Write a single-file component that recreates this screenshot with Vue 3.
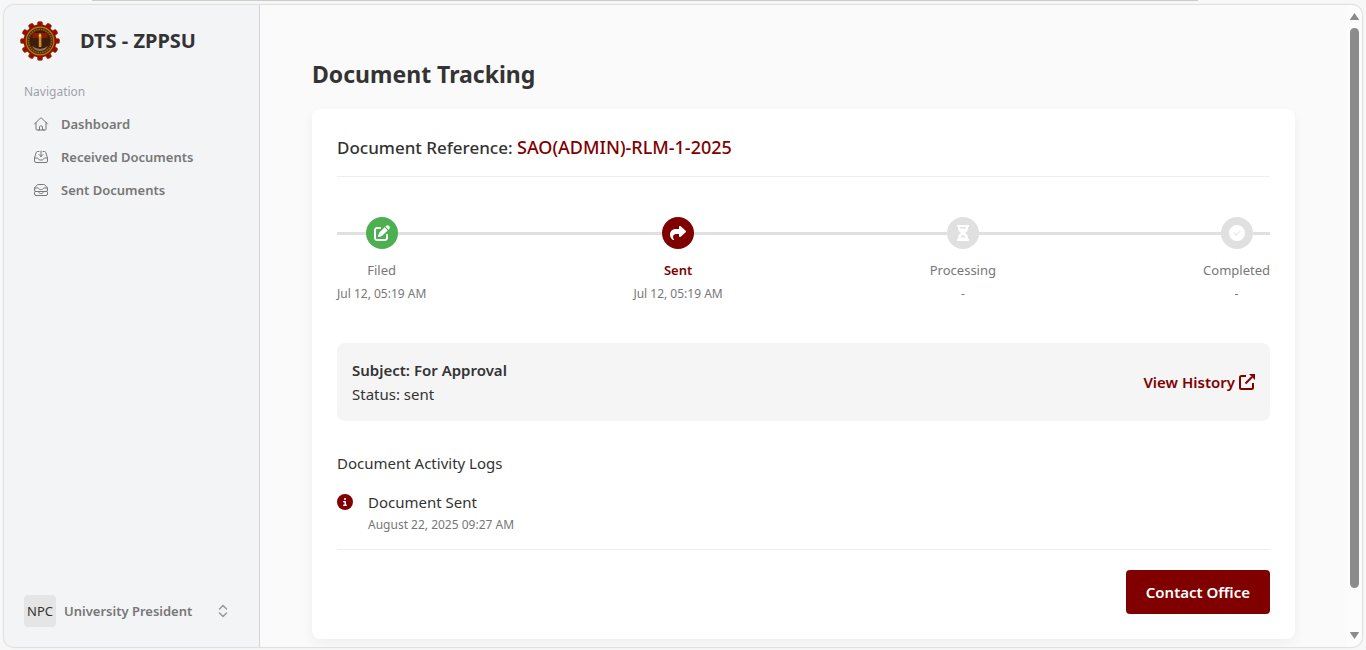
<template>
  <div class="browser">
    <div class="tab-strip"></div>
    <div class="window">
      <aside class="sidebar">
        <div class="brand">
          <svg class="brand-logo" viewBox="0 0 40 40" aria-hidden="true">
            <g fill="#8b1204" stroke="#a8460c" stroke-width="0.6">
              <rect
                v-for="n in 12"
                :key="n"
                x="17.4"
                y="0.4"
                width="5.2"
                height="7"
                rx="1.8"
                :transform="`rotate(${n * 30} 20 20)`"
              />
            </g>
            <circle cx="20" cy="20" r="16.4" fill="#8b1204" />
            <circle cx="20" cy="20" r="13.8" fill="#5a2608" stroke="#b8780e" stroke-width="1.2" />
            <circle cx="20" cy="20" r="11.6" fill="none" stroke="#8f6a14" stroke-width="1.4" stroke-dasharray="1.4 1" />
            <circle cx="20" cy="20" r="10.2" fill="#3d1d0b" />
            <path d="M12.5 12h15v5h-15z" fill="#8e1a08" />
            <path d="M12 25q8 6 16 0l-2 3q-6 4-12 0z" fill="#8d7a58" />
            <path d="M18.8 15h2.6v11h-2.6z" fill="#d08f28" />
            <path d="M20 12l1.6 2.6-1.6 1.6-1.6-1.6z" fill="#f2c648" />
          </svg>
          <span class="brand-name">DTS - ZPPSU</span>
        </div>

        <nav class="nav">
          <p class="nav-title">Navigation</p>
          <a v-for="item in navItems" :key="item.label" href="#" class="nav-link">
            <svg class="nav-icon" viewBox="0 0 24 24" aria-hidden="true">
              <path :d="item.icon" />
            </svg>
            {{ item.label }}
          </a>
        </nav>

        <button type="button" class="profile">
          <span class="avatar">NPC</span>
          <span class="profile-name">University President</span>
          <svg class="profile-icon" viewBox="0 0 16 16" aria-hidden="true">
            <path d="M4.5 6 8 2.500 11.500 6M4.500 10 8 13.500 11.500 10" />
          </svg>
        </button>
      </aside>

      <main class="content">
        <h1>Document Tracking</h1>

        <section class="card">
          <h2 class="reference">
            Document Reference: <span class="code">SAO(ADMIN)-RLM-1-2025</span>
          </h2>

          <ol class="steps">
            <li v-for="step in steps" :key="step.label" class="step" :class="step.state">
              <span class="step-circle">
                <svg :viewBox="step.viewBox" aria-hidden="true">
                  <path :d="step.icon" />
                </svg>
              </span>
              <span class="step-label">{{ step.label }}</span>
              <span class="step-date">{{ step.date }}</span>
            </li>
          </ol>

          <div class="summary">
            <div>
              <p class="subject">Subject: For Approval</p>
              <p>Status: sent</p>
            </div>
            <a href="#" class="history">
              View History
              <svg viewBox="0 0 16 16" aria-hidden="true">
                <path class="box" d="M7 2H2.5Q1 2 1 3.5V13.5Q1 15 2.5 15H12.5Q14 15 14 13.5V9" />
                <path class="box" d="M6.5 9.5 13 3" />
                <path class="head" d="M10 0h6v6z" />
              </svg>
            </a>
          </div>

          <h3>Document Activity Logs</h3>
          <ul class="logs">
            <li v-for="log in logs" :key="log.date" class="log">
              <svg class="log-icon" viewBox="0 0 512 512" aria-hidden="true">
                <path :d="infoIcon" />
              </svg>
              <div>
                <p class="log-title">{{ log.title }}</p>
                <p class="log-date">{{ log.date }}</p>
              </div>
            </li>
          </ul>

          <div class="actions">
            <button type="button" class="contact">Contact Office</button>
          </div>
        </section>
      </main>

      <div class="scrollbar" aria-hidden="true">
        <svg viewBox="0 0 9 7"><path d="M4.5 0 9 6.5Q9 7 8.5 7H.5Q0 7 0 6.5z" /></svg>
        <div class="track"><div class="thumb"></div></div>
        <svg viewBox="0 0 9 7"><path d="M4.5 7 9 .5Q9 0 8.5 0H.5Q0 0 0 .5z" /></svg>
      </div>
    </div>
  </div>
</template>

<script setup>
import { ref } from "vue";

// --- Sidebar ---
const navItems = [
  {
    label: "Dashboard",
    icon: "m2.25 12 8.954-8.955c.44-.439 1.152-.439 1.591 0L21.75 12M4.5 9.75v10.125c0 .621.504 1.125 1.125 1.125H9.75v-4.875c0-.621.504-1.125 1.125-1.125h2.25c.621 0 1.125.504 1.125 1.125V21h4.125c.621 0 1.125-.504 1.125-1.125V9.75M8.25 21h8.25",
  },
  {
    label: "Received Documents",
    icon: "M9 3.75H6.912a2.25 2.25 0 0 0-2.15 1.588L2.35 13.177a2.25 2.25 0 0 0-.1.661V18a2.25 2.25 0 0 0 2.25 2.25h15A2.25 2.25 0 0 0 21.75 18v-4.162c0-.224-.034-.447-.1-.661L19.24 5.338a2.25 2.25 0 0 0-2.15-1.588H15M2.25 13.5h3.86a2.25 2.25 0 0 1 2.012 1.244l.256.512a2.25 2.25 0 0 0 2.013 1.244h3.218a2.25 2.25 0 0 0 2.013-1.244l.256-.512a2.25 2.25 0 0 1 2.013-1.244h3.859M12 3v8.25m0 0-3-3m3 3 3-3",
  },
  {
    label: "Sent Documents",
    icon: "m7.875 14.25 1.214 1.942a2.25 2.25 0 0 0 1.908 1.058h2.006c.776 0 1.497-.4 1.908-1.058l1.214-1.942M2.41 9h4.636a2.25 2.25 0 0 1 1.872 1.002l.164.246a2.25 2.25 0 0 0 1.872 1.002h2.092a2.25 2.25 0 0 0 1.872-1.002l.164-.246A2.25 2.25 0 0 1 16.954 9h4.636M2.41 9a2.25 2.25 0 0 0-.16.832V12a2.25 2.25 0 0 0 2.25 2.25h15A2.25 2.25 0 0 0 21.75 12V9.832c0-.287-.055-.57-.16-.832M2.41 9a2.25 2.25 0 0 1 .382-.632l3.285-3.832a2.25 2.25 0 0 1 1.708-.786h8.43c.657 0 1.281.287 1.709.786l3.284 3.832c.163.19.291.404.382.632M4.5 20.25h15A2.25 2.25 0 0 0 21.75 18v-2.625c0-.621-.504-1.125-1.125-1.125H3.375c-.621 0-1.125.504-1.125 1.125V18a2.25 2.25 0 0 0 2.25 2.25Z",
  },
];

// --- Progress ---
const steps = ref([
  {
    label: "Filed",
    date: "Jul 12, 05:19 AM",
    state: "done",
    viewBox: "0 0 512 512",
    icon: "M471.6 21.7c-21.9-21.9-57.3-21.9-79.2 0L362.3 51.7l97.9 97.9 30.1-30.1c21.9-21.9 21.9-57.3 0-79.2L471.6 21.7zm-299.2 220c-6.1 6.1-10.8 13.6-13.5 21.9l-29.6 88.8c-2.9 8.6-.6 18.1 5.8 24.6s15.9 8.7 24.6 5.8l88.8-29.6c8.2-2.7 15.7-7.4 21.9-13.5L437.7 172.3 339.7 74.3 172.4 241.7zM96 64C43 64 0 107 0 160V416c0 53 43 96 96 96H352c53 0 96-43 96-96V320c0-17.7-14.3-32-32-32s-32 14.3-32 32v96c0 17.7-14.3 32-32 32H96c-17.7 0-32-14.3-32-32V160c0-17.7 14.3-32 32-32h96c17.7 0 32-14.3 32-32s-14.3-32-32-32H96z",
  },
  {
    label: "Sent",
    date: "Jul 12, 05:19 AM",
    state: "active",
    viewBox: "0 0 512 512",
    icon: "M307 34.8c-11.5 5.1-19 16.6-19 29.2v64H176C78.8 128 0 206.8 0 304C0 417.3 81.5 467.9 100.2 478.1c2.5 1.4 5.3 1.9 8.1 1.9c10.9 0 19.7-8.9 19.7-19.7c0-7.5-4.3-14.4-9.8-19.5C108.8 431.9 96 414.4 96 384c0-53 43-96 96-96h96v64c0 12.6 7.4 24.1 19 29.2s25 3 34.4-5.4l160-144c6.7-6.1 10.6-14.7 10.6-23.8s-3.8-17.7-10.6-23.8l-160-144c-9.4-8.5-22.9-10.6-34.4-5.4z",
  },
  {
    label: "Processing",
    date: "-",
    state: "pending",
    viewBox: "0 0 16 16",
    icon: "M2 0h12v2h-1v2q0 2.5-3 4 3 1.5 3 4v2h1v2H2v-2h1v-2q0-2.5 3-4-3-1.5-3-4V2H2zM5 2v1.5h6V2zM5.5 12.5h5Q10 10.5 8 10 6 10.5 5.5 12.5z",
  },
  {
    label: "Completed",
    date: "-",
    state: "pending",
    viewBox: "0 0 16 16",
    icon: "M8 0a8 8 0 1 1 0 16A8 8 0 1 1 8 0zM5.1 7.5 4.5 8.1 7.2 10.8 11.7 6.3 11.1 5.7 7.2 9.6z",
  },
]);

// --- Activity logs ---
const logs = ref([{ title: "Document Sent", date: "August 22, 2025 09:27 AM" }]);

const infoIcon =
  "M256 512A256 256 0 1 0 256 0a256 256 0 1 0 0 512zM216 336h24V272H216c-13.3 0-24-10.7-24-24s10.7-24 24-24h48c13.3 0 24 10.7 24 24v88h8c13.3 0 24 10.7 24 24s-10.7 24-24 24H216c-13.3 0-24-10.7-24-24s10.7-24 24-24zm40-208a32 32 0 1 1 0 64 32 32 0 1 1 0-64z";
</script>

<style>
body {
  margin: 0;
  background-color: #f7f7f7;
}
</style>

<style scoped>
* {
  box-sizing: border-box;
}

.browser {
  min-height: 100vh;
  display: flex;
  flex-direction: column;
  padding: 0 4px 3px;
  font-family: "Noto Sans", "Open Sans", sans-serif;
  font-size: 15px;
  line-height: 24px;
  color: #333;
}

.tab-strip {
  height: 1px;
  margin: 0 164px 4px 88px;
  background-color: #ccc;
}

.window {
  flex: 1;
  display: flex;
  overflow: hidden;
  border-radius: 10px;
  background-color: #fafafa;
  box-shadow: 0 0 2px rgba(0, 0, 0, 0.35);
}

h1,
h2,
h3,
p,
ol,
ul {
  margin: 0;
  padding: 0;
  list-style: none;
}

/* sidebar */
.sidebar {
  width: 256px;
  display: flex;
  flex-direction: column;
  padding: 16px;
  border-right: 1px solid #d4d4d8;
  background-color: #f3f4f6;
}

.brand {
  display: flex;
  align-items: center;
  gap: 20px;
}

.brand-logo {
  width: 40px;
  height: 40px;
}

.brand-name {
  font-size: 20px;
  font-weight: 700;
}

.nav {
  flex: 1;
  padding: 19px 4px;
}

.nav-title {
  margin-bottom: 3px;
  font-size: 12px;
  color: #a1a1aa;
}

.nav-link {
  display: flex;
  align-items: center;
  gap: 12px;
  height: 33px;
  padding-left: 9px;
  font-size: 13px;
  font-weight: 600;
  color: #777;
  text-decoration: none;
}

.nav-icon,
.profile-icon {
  width: 16px;
  height: 16px;
  fill: none;
  stroke: currentColor;
  stroke-width: 1.5;
  stroke-linecap: round;
  stroke-linejoin: round;
}

.profile {
  display: flex;
  align-items: center;
  gap: 8px;
  padding: 4px;
  border: none;
  background: none;
  font-family: inherit;
  text-align: left;
}

.avatar {
  width: 32px;
  height: 32px;
  border-radius: 4px;
  background-color: #e5e5e5;
  font-size: 13px;
  line-height: 32px;
  text-align: center;
  color: #333;
}

.profile-name {
  flex: 1;
  font-size: 13px;
  font-weight: 600;
  color: #777;
}

.profile-icon {
  margin-right: 8px;
  color: #999;
}

/* content */
.content {
  flex: 1;
  padding: 51px 52px 8px;
}

h1 {
  margin-bottom: 17px;
  font-size: 23px;
  font-weight: 700;
  line-height: 36px;
}

.card {
  padding: 25px;
  border-radius: 8px;
  background-color: #fff;
  box-shadow: 0 4px 12px rgba(0, 0, 0, 0.05);
}

.reference {
  padding-bottom: 15px;
  border-bottom: 1px solid #eee;
  font-size: 17px;
  font-weight: 500;
  line-height: 27px;
}

.code {
  font-size: 18px;
  color: #800000;
}

.steps {
  position: relative;
  display: flex;
  justify-content: space-between;
  margin: 40px 0 37px;
}

.steps::before {
  content: "";
  position: absolute;
  top: 15px;
  left: 0;
  right: 0;
  height: 3px;
  background-color: #e0e0e0;
}

.step {
  position: relative;
  display: flex;
  flex-direction: column;
  align-items: center;
  color: #777;
}

.step-circle {
  width: 32px;
  height: 32px;
  display: flex;
  align-items: center;
  justify-content: center;
  margin-bottom: 9px;
  border-radius: 50%;
  background-color: #e0e0e0;
}

.step-circle svg {
  width: 16px;
  height: 16px;
  fill: #fff;
  fill-rule: evenodd;
}

.done .step-circle {
  background-color: #4caf50;
}

.active .step-circle {
  background-color: #800000;
}

.step-label {
  font-size: 13px;
}

.active .step-label {
  font-weight: 600;
  color: #800000;
}

.step-date {
  font-size: 12px;
}

.summary {
  display: flex;
  justify-content: space-between;
  align-items: center;
  margin-bottom: 30px;
  padding: 15px;
  border-radius: 8px;
  background-color: #f5f5f5;
}

.subject {
  font-weight: 600;
}

.history {
  display: flex;
  align-items: center;
  gap: 4px;
  font-weight: 600;
  color: #800000;
  text-decoration: none;
}

.history svg {
  width: 16px;
  height: 16px;
}

.history .box {
  fill: none;
  stroke: currentColor;
  stroke-width: 2;
}

.history .head {
  fill: currentColor;
}

h3 {
  font-size: 15px;
  font-weight: 400;
}

.logs {
  padding: 15px 0 14px;
  border-bottom: 1px solid #eee;
}

.log {
  display: flex;
  gap: 15px;
}

.log-icon {
  width: 16px;
  height: 16px;
  margin-top: 4px;
  fill: #800000;
  fill-rule: evenodd;
}

.log-date {
  font-size: 12px;
  line-height: 21px;
  color: #777;
}

.actions {
  display: flex;
  justify-content: flex-end;
  padding-top: 20px;
}

.contact {
  padding: 10px 20px;
  border: none;
  border-radius: 4px;
  background-color: #800000;
  font-family: inherit;
  font-size: 15px;
  font-weight: 600;
  line-height: 24px;
  color: #fff;
  cursor: pointer;
}

/* scrollbar */
.scrollbar {
  width: 15px;
  display: flex;
  flex-direction: column;
  align-items: center;
  gap: 8px;
  padding: 8px 0;
  background-color: #fcfcfc;
}

.scrollbar svg {
  width: 9px;
  height: 7px;
  fill: #8b8b8b;
}

.track {
  flex: 1;
}

.thumb {
  width: 9px;
  height: 94%;
  border-radius: 5px;
  background-color: #8b8b8b;
}
</style>
